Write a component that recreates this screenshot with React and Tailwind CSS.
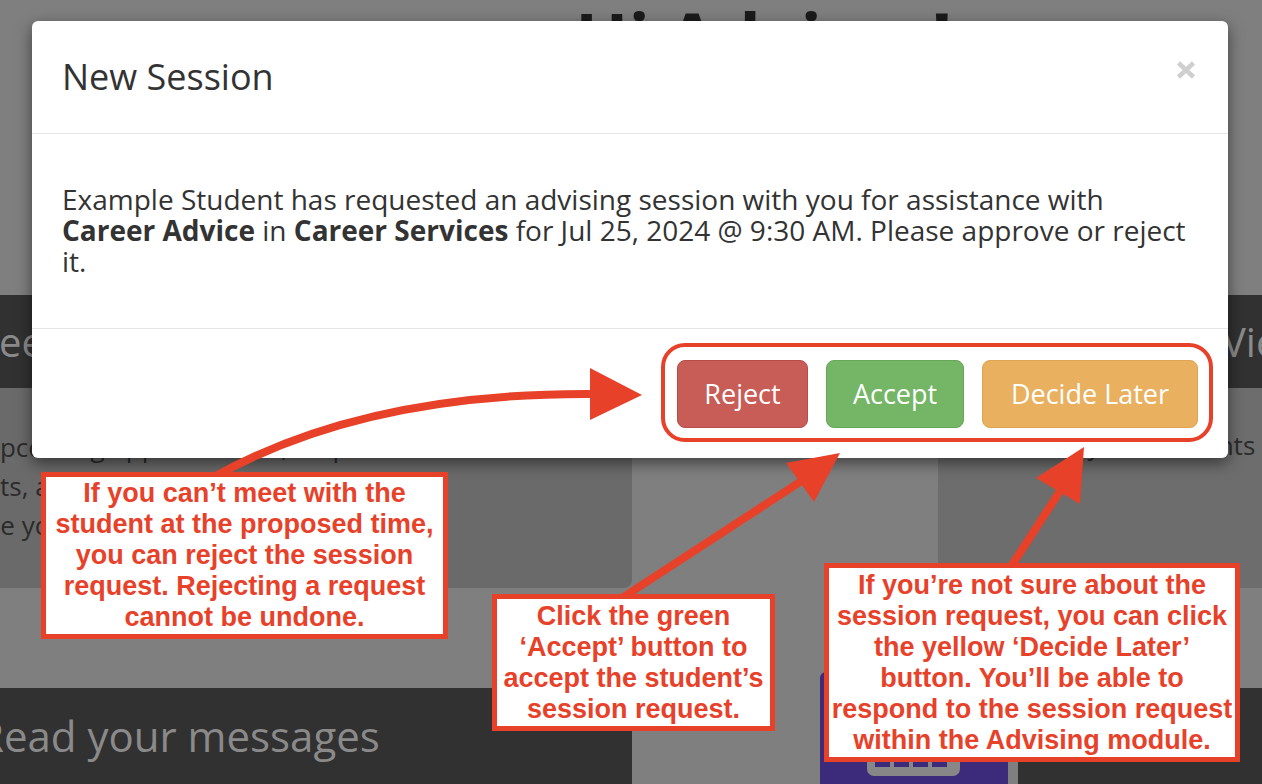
export default function App() {
  const box =
    "absolute bg-white border-[5px] border-[#e8412a] flex items-center justify-center text-center font-['Liberation_Sans',Arial,sans-serif] font-bold text-[27px] leading-[31px] text-[#e8412a] whitespace-nowrap";
  return (
    <div className="relative w-[1262px] h-[784px] overflow-hidden bg-[#7f7f7f] font-['Open_Sans',sans-serif]">
      {/* dimmed background page */}
      <div className="flex flex-col">
        <div className="h-[295px] pl-[575px] pt-[2px] overflow-hidden">
          <div className="text-[70px] leading-[70px] font-bold text-[#1b1b1b] whitespace-nowrap">Hi Advisor!</div>
        </div>
        <div className="flex h-[293px]">
          <div className="w-[632px] shrink-0 flex flex-col">
            <div className="h-[93px] bg-[#313131] pt-[27px] overflow-hidden whitespace-nowrap">
              <div className="ml-[-37px] text-[40px] leading-[40px] text-[#8a8a8a]">Meet with students</div>
            </div>
            <div className="flex-1 bg-[#6a6a6a] rounded-br-[8px] pt-[40px] overflow-hidden whitespace-nowrap text-[26px] leading-[39px] text-[#2b2b2b]">
              <div className="ml-[-16px]">upcoming appointments, respond to</div>
              <div className="ml-[-84px]">requests, and manage your calendar or</div>
              <div className="ml-[-82px]">Manage your availability.</div>
            </div>
          </div>
          <div className="w-[306px] shrink-0" />
          <div className="flex-1 min-w-0 flex flex-col">
            <div className="h-[93px] bg-[#313131] pt-[27px] pl-[284px] overflow-hidden whitespace-nowrap text-[40px] leading-[40px] text-[#8a8a8a]">
              View Students
            </div>
            <div className="flex-1 bg-[#6d6d6d] pl-[86px] pt-[38px] overflow-hidden whitespace-nowrap text-[26px] leading-[39px] text-[#2b2b2b]">
              View your students
            </div>
          </div>
        </div>
        <div className="flex h-[196px]">
          <div className="w-[632px] shrink-0 flex flex-col">
            <div className="h-[100px]" />
            <div className="flex-1 bg-[#313131] pt-[27px] overflow-hidden whitespace-nowrap">
              <div className="ml-[-22px] text-[42px] leading-[42px] text-[#8a8a8a]">Read your messages</div>
            </div>
          </div>
          <div className="w-[386px] shrink-0 pl-[188px] pt-[84px]">
            <div className="w-[188px] h-[112px] bg-[#3c2a7b] rounded-t-[6px] pl-[47px] pt-[44px]">
              <svg width="93" height="62" viewBox="0 0 93 62">
                <rect x="0" y="0" width="93" height="60" rx="7" fill="#878787" />
                <rect x="8" y="30" width="15" height="7" fill="#3c2a7b" />
                <rect x="27" y="30" width="15" height="7" fill="#3c2a7b" />
                <rect x="46" y="30" width="15" height="7" fill="#3c2a7b" />
                <rect x="65" y="30" width="15" height="7" fill="#3c2a7b" />
                <rect x="8" y="44" width="15" height="7" fill="#3c2a7b" />
                <rect x="27" y="44" width="15" height="7" fill="#3c2a7b" />
                <rect x="46" y="44" width="15" height="7" fill="#3c2a7b" />
                <rect x="65" y="44" width="15" height="7" fill="#3c2a7b" />
              </svg>
            </div>
          </div>
          <div className="flex-1 min-w-0 flex flex-col">
            <div className="h-[100px]" />
            <div className="flex-1 bg-[#313131]" />
          </div>
        </div>
      </div>

      {/* modal */}
      <div className="absolute left-[32px] top-[21px] w-[1196px] bg-white rounded-[6px] shadow-[0_5px_15px_rgba(0,0,0,0.5)] text-[#333333]">
        <div className="flex justify-between items-start px-[30px] py-[30px] border-b border-[#e5e5e5]">
          <div className="text-[36px] leading-[52px]">New Session</div>
          <svg className="mt-[10px] mr-[2px]" width="20" height="18" viewBox="0 0 20 18">
            <path d="M2.5 2 L17.5 16 M17.5 2 L2.5 16" stroke="#cfcfcf" strokeWidth="4.5" />
          </svg>
        </div>
        <div className="px-[30px] pt-[50px] pb-[51px] text-[28px] leading-[31px] whitespace-nowrap">
          Example Student has requested an advising session with you for assistance with
          <br />
          <b>Career Advice</b> in <b>Career Services</b> for Jul 25, 2024 @ 9:30 AM. Please approve or reject
          <br />
          it.
        </div>
        <div className="flex justify-end gap-[18px] px-[30px] pt-[31px] pb-[30px] border-t border-[#e5e5e5]">
          <div className="w-[131px] h-[68px] rounded-[8px] bg-[#c85c56] border border-[#b84d48] text-white text-[27px] flex items-center justify-center">
            Reject
          </div>
          <div className="w-[138px] h-[68px] rounded-[8px] bg-[#74b566] border border-[#66a758] text-white text-[27px] flex items-center justify-center">
            Accept
          </div>
          <div className="w-[216px] h-[68px] rounded-[8px] bg-[#e8b05f] border border-[#dea452] text-white text-[27px] flex items-center justify-center">
            Decide Later
          </div>
        </div>
      </div>

      {/* annotations */}
      <div className="absolute left-[661px] top-[343px] w-[552px] h-[99px] border-[4px] border-[#e8412a] rounded-[24px]" />

      <svg className="absolute left-0 top-0 pointer-events-none" width="1262" height="784" viewBox="0 0 1262 784">
        <path d="M214 477 Q365 392 596 394" stroke="#e8412a" strokeWidth="8" fill="none" />
        <polygon points="590,368 642,395 590,420" fill="#e8412a" />
        <path d="M622 598 L806 478" stroke="#e8412a" strokeWidth="8" fill="none" />
        <polygon points="786,463 840,453 814,502" fill="#e8412a" />
        <path d="M1012 565 L1062 488" stroke="#e8412a" strokeWidth="8" fill="none" />
        <polygon points="1036,478 1084,447 1080,504" fill="#e8412a" />
      </svg>

      <div className={box + " left-[41px] top-[472px] w-[407px] h-[167px]"}>
        <div>
          If you can’t meet with the
          <br />
          student at the proposed time,
          <br />
          you can reject the session
          <br />
          request. Rejecting a request
          <br />
          cannot be undone.
        </div>
      </div>
      <div className={box + " left-[492px] top-[594px] w-[283px] h-[137px]"}>
        <div>
          Click the green
          <br />
          ‘Accept’ button to
          <br />
          accept the student’s
          <br />
          session request.
        </div>
      </div>
      <div className={box + " left-[824px] top-[563px] w-[416px] h-[199px]"}>
        <div>
          If you’re not sure about the
          <br />
          session request, you can click
          <br />
          the yellow ‘Decide Later’
          <br />
          button. You’ll be able to
          <br />
          respond to the session request
          <br />
          within the Advising module.
        </div>
      </div>
    </div>
  );
}
